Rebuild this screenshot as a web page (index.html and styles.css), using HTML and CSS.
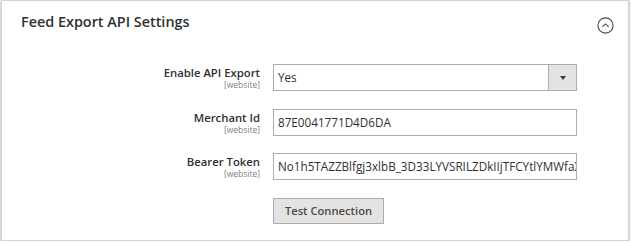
FILE: index.html
```html
<!DOCTYPE html>
<html lang="en">
<head>
    <meta charset="UTF-8">
    <title>Feed Export API Settings</title>
    <link rel="stylesheet" href="styles.css">
</head>
<body>
    <div class="panel">
        <div class="panel-head">
            <h2>Feed Export API Settings</h2>
            <svg class="toggle" width="17" height="17" viewBox="0 0 17 17">
                <circle cx="8.5" cy="8.5" r="7.6" fill="none" stroke="#4a4a4a" stroke-width="1.1"/>
                <path d="M5.4 9.9 L8.5 6.9 L11.6 9.9" fill="none" stroke="#4a4a4a" stroke-width="1.1"/>
            </svg>
        </div>
        <div class="fields">
            <div class="row">
                <div class="label">
                    <span class="name">Enable API Export</span>
                    <span class="scope">[website]</span>
                </div>
                <div class="select">
                    <span class="value">Yes</span>
                    <span class="arrow"></span>
                </div>
            </div>
            <div class="row">
                <div class="label">
                    <span class="name">Merchant Id</span>
                    <span class="scope">[website]</span>
                </div>
                <div class="input">87E0041771D4D6DA</div>
            </div>
            <div class="row">
                <div class="label">
                    <span class="name">Bearer Token</span>
                    <span class="scope">[website]</span>
                </div>
                <div class="input">No1h5TAZZBlfgj3xlbB_3D33LYVSRILZDkIIjTFCYtlYMWfaXdQ2</div>
            </div>
            <div class="row">
                <div></div>
                <div><button class="btn">Test Connection</button></div>
            </div>
        </div>
    </div>
</body>
</html>
```

FILE: styles.css
```css
body {
    margin: 0;
    background: #ffffff;
    font-family: 'Open Sans', 'Liberation Sans', sans-serif;
    color: #303030;
}

.panel {
    margin-left: 1px;
    width: 626px;
    height: 239px;
    border: 1px solid #d4d4d4;
    box-shadow: 0 1px 2px rgba(0, 0, 0, 0.45);
    background: #ffffff;
}

.panel-head {
    display: flex;
    justify-content: space-between;
    align-items: center;
    padding: 9px 14px 0 19px;
}

.panel-head h2 {
    margin: 0;
    font-size: 14.4px;
    font-weight: 600;
    line-height: 22px;
    color: #303030;
}

.toggle {
    margin-top: 7px;
}

.fields {
    display: flex;
    flex-direction: column;
    gap: 17.5px;
    padding-top: 30px;
}

.row {
    display: grid;
    grid-template-columns: 258px 304px;
    grid-template-rows: 27px;
    column-gap: 13px;
}

.label {
    display: flex;
    flex-direction: column;
    align-items: flex-end;
    padding-top: 1px;
}

.label .name {
    font-size: 11.3px;
    font-weight: 600;
    line-height: 15px;
    color: #303030;
}

.label .scope {
    font-size: 8.5px;
    line-height: 10px;
    color: #808080;
}

.select, .input {
    box-sizing: border-box;
    height: 27px;
    border: 1px solid #adadad;
    font-size: 11.7px;
    line-height: 25px;
    color: #303030;
    background: #ffffff;
}

.select {
    display: flex;
    justify-content: space-between;
}

.select .value {
    padding-left: 4px;
}

.select .arrow {
    width: 27px;
    border-left: 1px solid #adadad;
    background: #e3e3e3;
    position: relative;
}

.select .arrow::after {
    content: '';
    position: absolute;
    left: 11px;
    top: 11px;
    border-left: 3px solid transparent;
    border-right: 3px solid transparent;
    border-top: 4px solid #41362f;
}

.input {
    padding-left: 4px;
    white-space: nowrap;
    overflow: hidden;
}

.btn {
    box-sizing: border-box;
    height: 26px;
    width: 111px;
    border: 1px solid #adadad;
    background: #e3e3e3;
    font-family: inherit;
    font-size: 11.2px;
    font-weight: 600;
    color: #514943;
    padding: 0;
}
```
